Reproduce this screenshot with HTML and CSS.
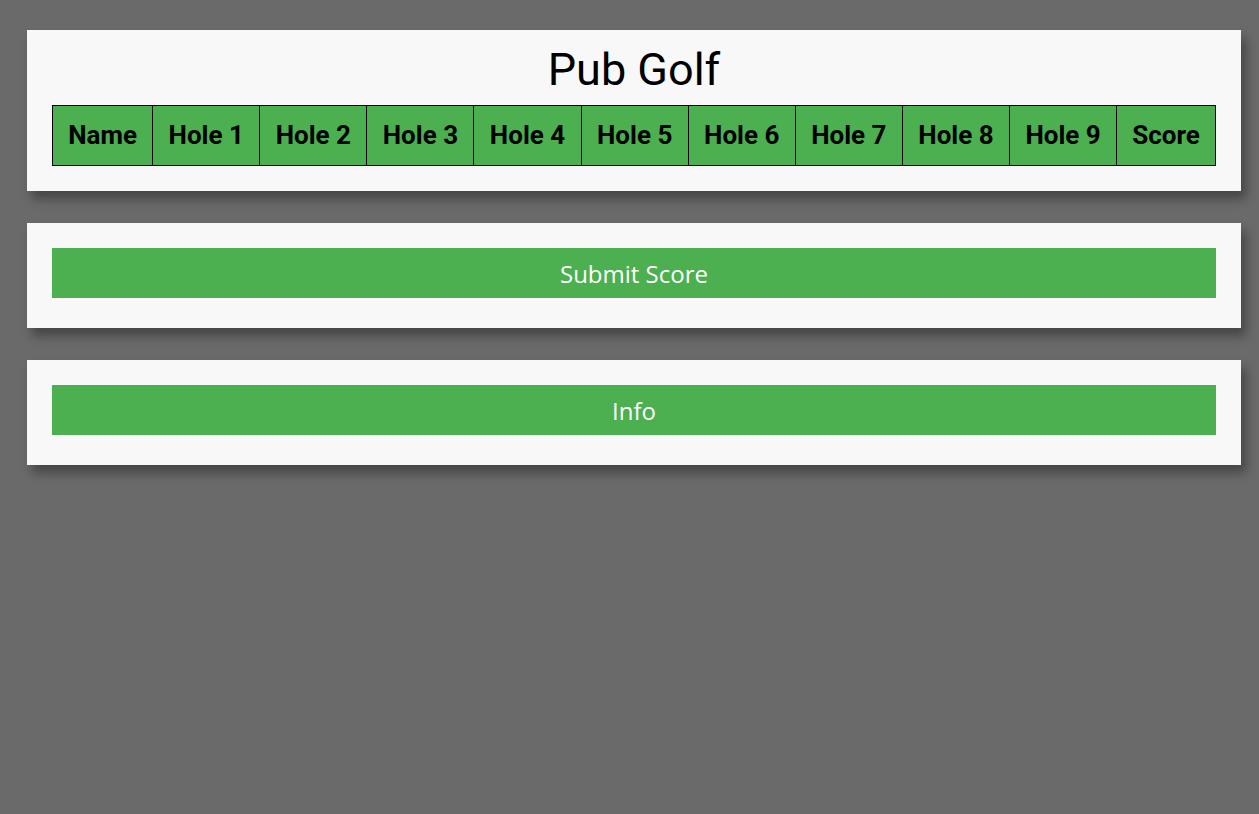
FILE: index.html
```html
<!DOCTYPE html>
<html lang="en">
<head>
<meta charset="utf-8">
<title>Pub Golf</title>
<link rel="stylesheet" href="styles.css">
</head>
<body>
<main class="page">
  <section class="card card-title">
    <h1 class="title">Pub Golf</h1>
    <table class="scores">
      <thead>
        <tr>
          <th>Name</th>
          <th>Hole 1</th>
          <th>Hole 2</th>
          <th>Hole 3</th>
          <th>Hole 4</th>
          <th>Hole 5</th>
          <th>Hole 6</th>
          <th>Hole 7</th>
          <th>Hole 8</th>
          <th>Hole 9</th>
          <th>Score</th>
        </tr>
      </thead>
    </table>
  </section>
  <section class="card card-action">
    <button class="btn" type="button">Submit Score</button>
  </section>
  <section class="card card-action">
    <button class="btn" type="button">Info</button>
  </section>
</main>
</body>
</html>
```
FILE: styles.css
```css
html, body {
  margin: 0;
  padding: 0;
}
body {
  background: #6a6a6a;
  font-family: Roboto, "Liberation Sans", sans-serif;
  min-height: 814px;
}
.page {
  display: flex;
  flex-direction: column;
  gap: 32px;
  padding: 30px 18px 0 27px;
}
.card {
  background: #f8f8f8;
  padding: 25px;
  box-shadow: 5px 8px 10px rgba(0, 0, 0, 0.35);
}
.card-title {
  padding-top: 14px;
}
.card-action {
  padding-bottom: 30px;
}
.title {
  margin: 0 0 9px;
  font-family: Roboto, sans-serif;
  font-weight: 400;
  font-size: 45px;
  line-height: 52px;
  text-align: center;
  color: #000;
}
.scores {
  width: 100%;
  border-collapse: collapse;
  background: #4caf50;
}
.scores th {
  border: 1px solid #000;
  padding: 15px 12px;
  font-family: Roboto, sans-serif;
  font-weight: 700;
  font-size: 26px;
  line-height: 29px;
  color: #000;
  text-align: center;
  white-space: nowrap;
}
.btn {
  display: block;
  width: 100%;
  height: 50px;
  border: none;
  background: #4caf50;
  color: #fff;
  font-family: "Open Sans", sans-serif;
  font-size: 24px;
  padding: 0;
  cursor: pointer;
}
```
